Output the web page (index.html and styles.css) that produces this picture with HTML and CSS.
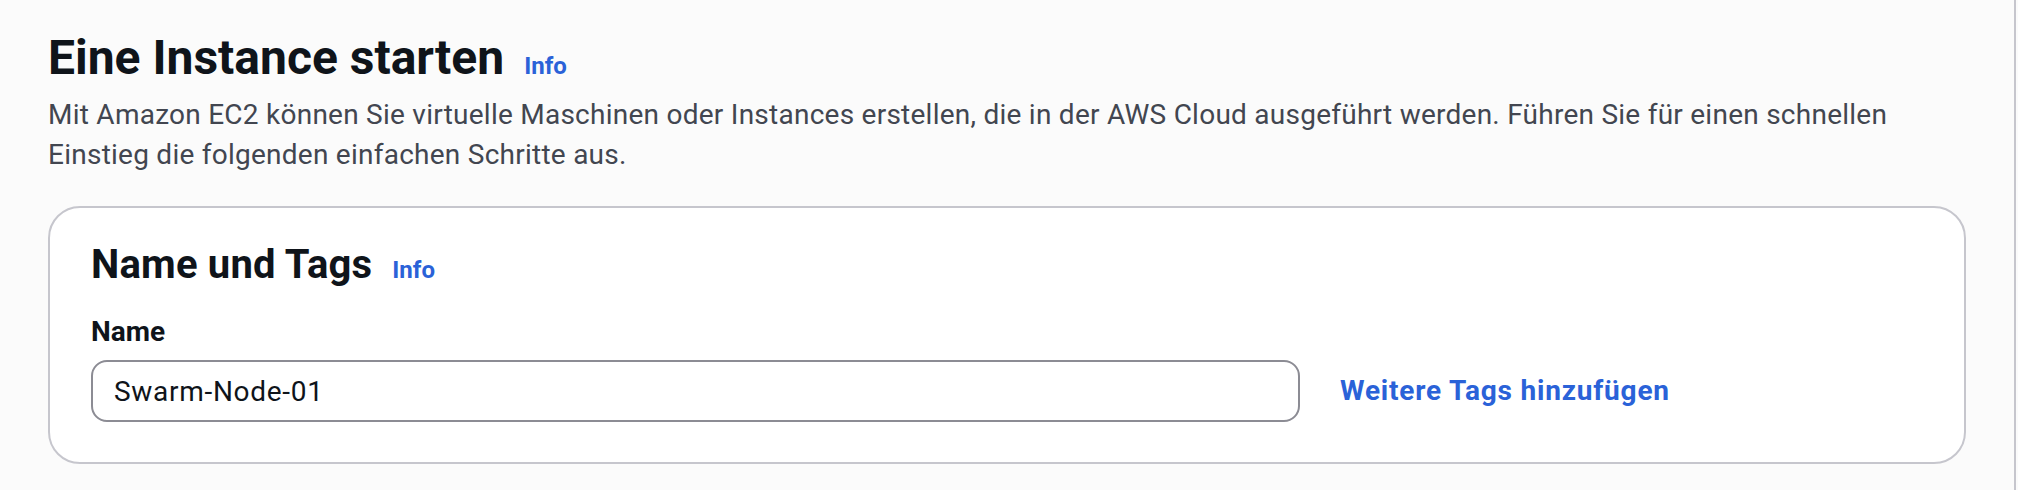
FILE: index.html
```html
<!DOCTYPE html>
<html lang="de">
<head>
<meta charset="utf-8">
<title>Eine Instance starten</title>
<link rel="stylesheet" href="styles.css">
</head>
<body>
<div class="app">
  <main class="content">
    <header class="page-header">
      <div class="title-row">
        <h1 class="page-title">Eine Instance starten</h1>
        <a class="info-link" href="#">Info</a>
      </div>
      <p class="page-desc">Mit Amazon EC2 können Sie virtuelle Maschinen oder Instances erstellen, die in der AWS Cloud ausgeführt werden. Führen Sie für einen schnellen Einstieg die folgenden einfachen Schritte aus.</p>
    </header>
    <section class="card">
      <div class="card-title-row">
        <h2 class="card-title">Name und Tags</h2>
        <a class="info-link" href="#">Info</a>
      </div>
      <label class="field-label" for="instance-name">Name</label>
      <div class="field-row">
        <input class="text-input" id="instance-name" type="text" value="Swarm-Node-01">
        <a class="action-link" href="#">Weitere Tags hinzufügen</a>
      </div>
    </section>
  </main>
  <div class="side-rail"></div>
</div>
</body>
</html>
```
FILE: styles.css
```css
* { box-sizing: border-box; }
html, body { margin: 0; padding: 0; }
body {
  background: #fbfbfb;
  font-family: Roboto, "Liberation Sans", Arial, sans-serif;
  color: #0f141a;
  height: 490px;
  overflow: hidden;
}
.app {
  display: flex;
  height: 490px;
}
.content {
  flex: 0 0 2014px;
  padding: 28px 48px 0 48px;
}
.side-rail {
  flex: 1;
  border-left: 2px solid #c6c6cd;
}
.title-row, .card-title-row {
  display: flex;
  align-items: baseline;
}
.title-row { gap: 20px; }
.card-title-row { gap: 20px; }
.page-title {
  margin: 0;
  font-size: 48px;
  line-height: 60px;
  font-weight: 700;
  color: #0f141a;
}
.info-link {
  font-size: 24px;
  font-weight: 700;
  color: #2a62d8;
  text-decoration: none;
}
.page-desc {
  margin: 7px 0 0 0;
  font-size: 28px;
  line-height: 40px;
  letter-spacing: 0.25px;
  color: #424650;
}
.card {
  margin-top: 31px;
  background: #ffffff;
  border: 2px solid #c6c6cd;
  border-radius: 32px;
  padding: 34px 40px 40px 41px;
}
.card-title {
  margin: 0;
  font-size: 40px;
  line-height: 46px;
  font-weight: 700;
  letter-spacing: 0.2px;
  color: #0f141a;
}
.field-label {
  display: block;
  margin-top: 24px;
  font-size: 28px;
  line-height: 40px;
  font-weight: 700;
  color: #0f141a;
}
.field-row {
  margin-top: 8px;
  display: flex;
  align-items: center;
  gap: 40px;
}
.text-input {
  flex: 0 0 1209px;
  height: 62px;
  border: 2px solid #8c8c94;
  border-radius: 16px;
  padding: 0 21px;
  font-family: inherit;
  font-size: 28px;
  letter-spacing: 0.7px;
  color: #0f141a;
  background: #ffffff;
  outline: none;
}
.action-link {
  font-size: 28px;
  line-height: 40px;
  font-weight: 700;
  letter-spacing: 0.8px;
  color: #2a62d8;
  text-decoration: none;
}
```
